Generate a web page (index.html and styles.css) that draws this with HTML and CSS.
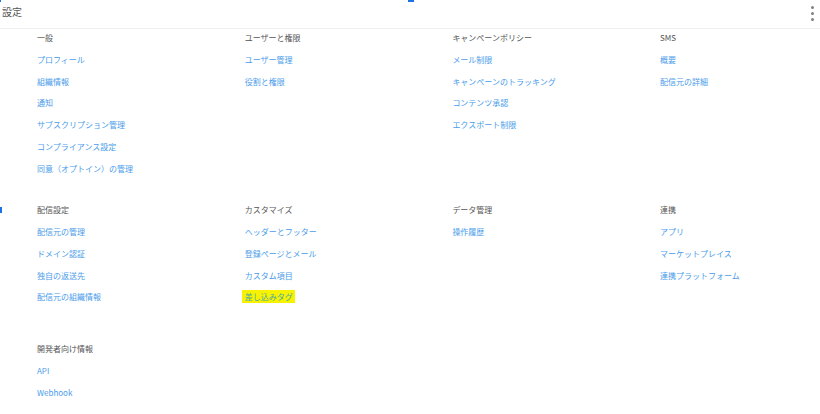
FILE: index.html
```html
<html lang="ja">
<head>
    <meta charset="UTF-8">
    <meta name="viewport" content="width=device-width, initial-scale=1.0">
    <title>設定</title>
    <link rel="stylesheet" href="styles.css">
</head>
<body>
    <span class="mark mark-corner"></span>
    <span class="mark mark-top"></span>
    <span class="mark mark-side"></span>
    <div class="header">
        <span class="title">設定</span>
        <span class="kebab"><i></i><i></i><i></i></span>
    </div>
    <div class="settings">
        <div class="group">
            <div class="section">
                <div class="heading">一般</div>
                <a>プロフィール</a>
                <a>組織情報</a>
                <a>通知</a>
                <a>サブスクリプション管理</a>
                <a>コンプライアンス設定</a>
                <a>同意（オプトイン）の管理</a>
            </div>
            <div class="section">
                <div class="heading">ユーザーと権限</div>
                <a>ユーザー管理</a>
                <a>役割と権限</a>
            </div>
            <div class="section">
                <div class="heading">キャンペーンポリシー</div>
                <a>メール制限</a>
                <a>キャンペーンのトラッキング</a>
                <a>コンテンツ承認</a>
                <a>エクスポート制限</a>
            </div>
            <div class="section">
                <div class="heading">SMS</div>
                <a>概要</a>
                <a>配信元の詳細</a>
            </div>
        </div>
        <div class="group group-wide">
            <div class="section">
                <div class="heading">配信設定</div>
                <a>配信元の管理</a>
                <a>ドメイン認証</a>
                <a>独自の返送先</a>
                <a>配信元の組織情報</a>
            </div>
            <div class="section">
                <div class="heading">カスタマイズ</div>
                <a>ヘッダーとフッター</a>
                <a>登録ページとメール</a>
                <a>カスタム項目</a>
                <a><mark>差し込みタグ</mark></a>
            </div>
            <div class="section">
                <div class="heading">データ管理</div>
                <a>操作履歴</a>
            </div>
            <div class="section">
                <div class="heading">連携</div>
                <a>アプリ</a>
                <a>マーケットプレイス</a>
                <a>連携プラットフォーム</a>
            </div>
        </div>
        <div class="group">
            <div class="section">
                <div class="heading">開発者向け情報</div>
                <a>API</a>
                <a>Webhook</a>
            </div>
        </div>
    </div>
</body>
</html>
```

FILE: styles.css
```css
body {margin: 0; background-color: #fff; font-family: "Noto Sans CJK JP", "Noto Sans", sans-serif; color: #555; overflow: hidden;}
.header {height: 28px; border-bottom: 1px solid #f0f0f0; display: flex; align-items: center; justify-content: space-between; padding: 0 6px 0 2px;}
.title {font-size: 10px; color: #555; margin-top: -5px;}
.kebab {display: flex; flex-direction: column; gap: 3px; margin-top: -2px;}
.kebab i {width: 3px; height: 3px; border-radius: 50%; background-color: #808080;}
.settings {padding: 2px 0 0 37px;}
.group {display: grid; grid-template-columns: repeat(3, 207.7px) 1fr; margin-bottom: 20px;}
.group-wide {margin-bottom: 30px;}
.section {display: flex; flex-direction: column;}
.heading, .section a {font-size: 8px; line-height: 14px; margin-bottom: 7.75px; white-space: nowrap;}
.heading {color: #555;}
.section a {color: #4a9cea; cursor: pointer;}
mark {background-color: #f7f300; color: #4aa7a8; padding: 1px 2px 1px 3px; margin-left: -3px;}
.mark {position: absolute; background-color: #1a73e8;}
.mark-corner {left: 0; top: 0; width: 1px; height: 2px;}
.mark-top {left: 408px; top: 0; width: 6px; height: 2px;}
.mark-side {left: 0; top: 207px; width: 2px; height: 6px;}
```
